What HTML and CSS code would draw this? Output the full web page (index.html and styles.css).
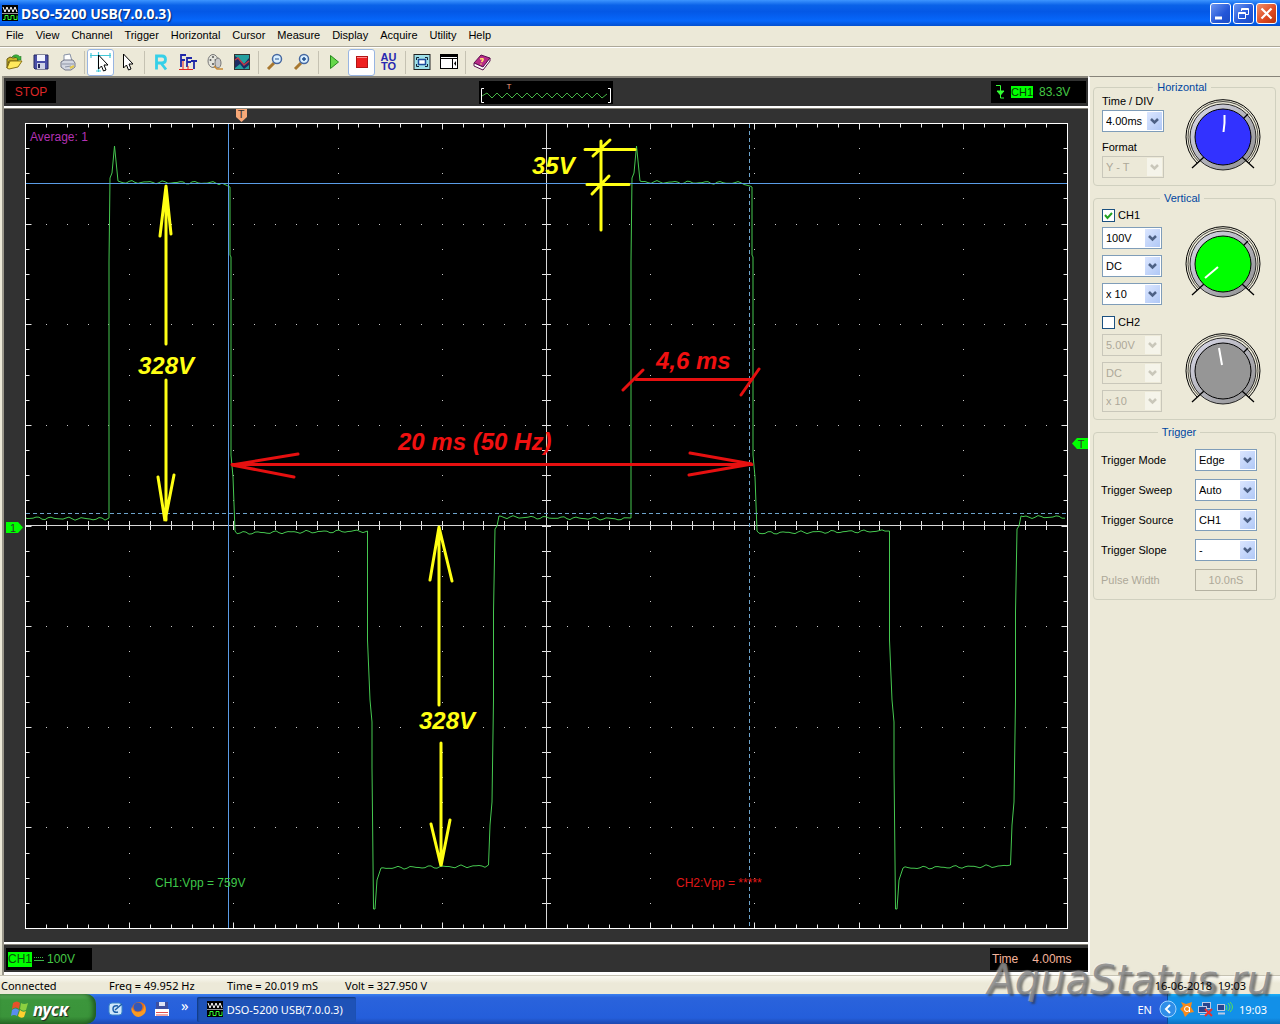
FILE: index.html
```html
<!DOCTYPE html>
<html lang="en">
<head>
    <meta charset="UTF-8">
    <meta name="viewport" content="width=device-width, initial-scale=1.0">
    <title>DSO-5200 USB(7.0.0.3)</title>
    <link rel="stylesheet" href="styles.css">
</head>
<body>

    <!-- shared drawings -->
    <svg class="defs" width="0" height="0" aria-hidden="true">
        <defs>
            <linearGradient id="ringFill" x1="0" y1="0" x2="1" y2="1">
                <stop offset="0" stop-color="#dcdcec"/>
                <stop offset="1" stop-color="#8c8c8c"/>
            </linearGradient>
            <symbol id="appIcon" viewBox="0 0 16 16">
                <rect width="16" height="16" fill="#000"/>
                <path d="M0 8.500H16" stroke="#999"/>
                <path d="M1 2l2 5 2-5 2 5 2-5 2 5 2-5 2 5" fill="none" stroke="#fff"/>
                <path d="M1 14.500h2v-4h3v4h3v-4h3v4h3v-4" fill="none" stroke="#3f3"/>
            </symbol>
            <symbol id="knobBase" viewBox="0 0 78 82">
                <path d="M13 67A37 37 0 1 1 65 67" fill="none" stroke="#000"/>
                <path d="M15 66A35 35 0 1 1 63 66" fill="none" stroke="#000" stroke-width=".7"/>
                <circle cx="39" cy="41" r="33" fill="url(#ringFill)" stroke="#000" stroke-width=".8"/>
                <path d="M8 72l12-11M70 72L58 61M59 23l5-5" stroke="#000" stroke-width="1.300"/>
            </symbol>
        </defs>
    </svg>

    <header class="titlebar">
        <svg width="16" height="16"><use href="#appIcon"/></svg>
        <h1>DSO-5200 USB(7.0.0.3)</h1>
        <div class="window-buttons">
            <button aria-label="Minimize"><svg width="19" height="19"><path d="M4 14h7" stroke="#fff" stroke-width="3"/></svg></button>
            <button aria-label="Restore"><svg width="19" height="19" fill="none" stroke="#fff"><path d="M7.500 7V4.500h7v6H12M7 5.500h7M4.500 8.500h7v6h-7zM4 9.500h7"/></svg></button>
            <button class="close" aria-label="Close"><svg width="19" height="19"><path d="M4.500 4.500l10 10M14.500 4.500l-10 10" stroke="#fff" stroke-width="2.200"/></svg></button>
        </div>
    </header>

    <nav class="menubar">
        <button>File</button>
        <button>View</button>
        <button>Channel</button>
        <button>Trigger</button>
        <button>Horizontal</button>
        <button>Cursor</button>
        <button>Measure</button>
        <button>Display</button>
        <button>Acquire</button>
        <button>Utility</button>
        <button>Help</button>
    </nav>

    <div class="toolbar">
        <button aria-label="Open">
            <svg width="18" height="18"><path d="M2 6l3-2 3 1 5-1v4H4l-2 7z" fill="#c8b428" stroke="#6b5a10"/><path d="M2 15l3-7h12l-4 6-9 2z" fill="#ffe95c" stroke="#8a7413"/><path d="M7 4c2-3 6-3 8 0l1-1v4h-4l1-1c-2-2-4-2-6-2z" fill="#3bb13b" stroke="#1c701c" stroke-width=".5"/></svg>
        </button>
        <button aria-label="Save">
            <svg width="18" height="18"><path d="M2 2h14v14H3l-1-1z" fill="#4a4fa8" stroke="#24285f"/><rect x="5" y="2" width="8" height="6" fill="#f2f4ff"/><rect x="5" y="10" width="8" height="6" fill="#cfd3e6"/><rect x="6" y="11" width="2" height="4" fill="#24285f"/></svg>
        </button>
        <button aria-label="Print">
            <svg width="18" height="18"><path d="M5 8V2l6-1 2 7z" fill="#fff" stroke="#8791a5"/><path d="M2 9l3-2h9l2 3v4l-4 3H6l-4-3z" fill="#d4d8e2" stroke="#74798a"/><path d="M3 11h12M6 14l6-1" stroke="#8f95a6"/><path d="M11 15l4-2" stroke="#e5c94a" stroke-width="2"/></svg>
        </button>
        <span class="separator"></span>
        <button class="pressed" aria-label="Cross cursor">
            <svg width="22" height="22" fill="none"><path d="M0 4.500h21M8.500 1v20M1 2v5M20 2v5M6 20h5" stroke="#45c8d8" stroke-width="1.200"/><path d="M8.500 4v14l3-3 2 5 2.500-1-2-5h4z" fill="#fff" stroke="#000"/></svg>
        </button>
        <button aria-label="Pointer">
            <svg width="18" height="18"><path d="M4.500 1v14l3-3 2 5 2.500-1-2-5h4z" fill="#fff" stroke="#000"/></svg>
        </button>
        <span class="separator"></span>
        <button aria-label="Reference">
            <svg width="18" height="18" fill="none"><path d="M4.500 16.500V3h5.500q3.500 0 3.500 3.500T10 10H5M9 10l5 6.500" stroke="#35d0e8" stroke-width="2.800"/></svg>
        </button>
        <button aria-label="FFT">
            <svg width="20" height="20" fill="none"><path d="M3 15V3h5M3 8h4M9 15V6h5M9 10h4M13 9h6M16 9v8" stroke="#2028a8" stroke-width="1.800"/><path d="M1 17.500h14M5 9v8M10 14v4" stroke="#e02020"/></svg>
        </button>
        <button aria-label="Record">
            <svg width="18" height="18"><ellipse cx="7" cy="8" rx="5" ry="6.500" fill="#e4e4dc" stroke="#777"/><g fill="#555"><circle cx="7" cy="4" r="1"/><circle cx="4.500" cy="7" r="1"/><circle cx="9.500" cy="7" r="1"/><circle cx="7" cy="11" r="1"/></g><ellipse cx="12" cy="10" rx="3" ry="5" fill="#c9c9c9" stroke="#777"/><path d="M8 13l3 3h6" fill="none" stroke="#c98a35" stroke-width="1.500"/></svg>
        </button>
        <button aria-label="Pass fail">
            <svg width="18" height="18"><rect x="1.500" y="1.500" width="15" height="15" fill="#24a0a0" stroke="#333"/><path d="M2 3l5 4 4 4 5-6v7l-5 4-4-5-5 4z" fill="#1d2c64"/><path d="M2 7l3-2 6 7 5-4" fill="none" stroke="#c03848" stroke-width="1.500"/></svg>
        </button>
        <span class="separator"></span>
        <button aria-label="Zoom out">
            <svg width="18" height="18"><path d="M2 16l6-6" stroke="#a87830" stroke-width="3"/><circle cx="11" cy="6" r="4.500" fill="#d9efff" stroke="#4668a0" stroke-width="1.500"/><path d="M9 6h4" stroke="#205090"/></svg>
        </button>
        <button aria-label="Zoom in">
            <svg width="18" height="18"><path d="M2 16l6-6" stroke="#a87830" stroke-width="3"/><circle cx="11" cy="6" r="4.500" fill="#d9efff" stroke="#4668a0" stroke-width="1.500"/><path d="M9 6h4M11 4v4" stroke="#205090" stroke-width="1.500"/></svg>
        </button>
        <span class="separator"></span>
        <button aria-label="Run">
            <svg width="18" height="18"><path d="M4.500 2.500v13l8-6.500z" fill="#66d84a" stroke="#258a1c"/></svg>
        </button>
        <button class="pressed" aria-label="Stop">
            <svg width="18" height="18"><rect x="3.500" y="3.500" width="11" height="11" fill="#ee2020" stroke="#b31515"/><path d="M4 4.500h10" stroke="#ff8a8a"/></svg>
        </button>
        <button class="auto">AU<br>TO</button>
        <span class="separator"></span>
        <button aria-label="Full screen">
            <svg width="18" height="18"><rect x="1" y="1.500" width="16" height="15" fill="#9ee0e8" stroke="#222"/><path d="M3.500 7V4.500H6M12 4.500h2.500V7M3.500 11v2.500H6M12 13.500h2.500V11" fill="none" stroke="#123"/><rect x="5.500" y="6.500" width="7" height="5" fill="#fff" stroke="#1d4b9a" stroke-width="1.500"/></svg>
        </button>
        <button aria-label="Hide panel">
            <svg width="20" height="18"><rect x="1.500" y="1.500" width="17" height="14" fill="#fff" stroke="#000"/><path d="M2 3h17" stroke="#000" stroke-width="2"/><path d="M2 5.500h17M13.500 5v11" stroke="#000"/><path d="M17 8l-2 2.500 2 2.500z"/></svg>
        </button>
        <span class="separator"></span>
        <button aria-label="Help">
            <svg width="18" height="18"><path d="M1 10l7-8 9 3-7 9z" fill="#b82a86" stroke="#5b0f4f"/><path d="M1 10v3l9 4 7-9V5l-7 9z" fill="#fff" stroke="#5b0f4f"/><path d="M7 6q4-1 3 1L8.500 9M8 10.500v1" fill="none" stroke="#ffe36a" stroke-width="1.500"/></svg>
        </button>
    </div>

    <main class="main">
        <section class="workspace">
            <div class="info-bar info-top">
                <div class="readout stop">STOP</div>
                <svg class="overview" width="134" height="23" aria-label="Buffer position">
                    <rect width="134" height="23" fill="#000"/>
                    <path d="M5 7.500H2.500v14H5M129 7.500h2.500v14H129" fill="none" stroke="#fff"/>
                    <path d="M3 15l5-3 5 5 5-5 5 5 5-5 5 5 5-5 5 5 5-5 5 5 5-5 5 5 5-5 5 5 5-5 5 5 5-5 5 5 5-5 5 5 5-5 5 5 5-5 5 5 5-4" fill="none" stroke="#46b446"/>
                    <text class="overview-mark" x="30" y="8" text-anchor="middle">T</text>
                </svg>
                <div class="readout trigger-level">
                    <svg width="10" height="16" fill="none" stroke="#3f3"><path d="M1 1.500h4.500v12.500H9"/><path d="M2 7h7l-3.500 4z" fill="#3f3"/></svg>
                    <span class="badge">CH1</span>
                    <span>83.3V</span>
                </div>
            </div>

            <div class="view">
                <svg class="scope" viewBox="4 109 1084 833" role="img" aria-label="Waveform display">
                    <rect x="25" y="123" width="1043" height="806" fill="#000"/>
                    <path id="dots" stroke="#c8c8c8"/>
                    <path id="ticks" stroke="#e6e6e6"/>
                    <path d="M25.500 525.500H1067.500M546.500 123.500V928.500" stroke="#d8d8d8"/>
                    <rect x="25.500" y="123.500" width="1042" height="805" fill="none" stroke="#fff"/>

                    <path id="trace" fill="none" stroke="#46c850"/>

                    <!-- measuring cursors -->
                    <path d="M228.500 124V928M26 183.500H1067" stroke="#5a9ce6"/>
                    <path d="M749.500 124V928M26 513.500H1067" stroke="#6da4cc" stroke-dasharray="4 3"/>

                    <!-- position markers -->
                    <path d="M236 109h11v8l-5.500 5-5.500-5z" fill="#f7a878"/>
                    <text class="mark" x="241" y="118" text-anchor="middle">T</text>
                    <path d="M6 522h12l5 5.500-5 5.500H6z" fill="#0f0"/>
                    <text class="mark" x="13" y="532" text-anchor="middle">1</text>
                    <path d="M1088 438h-11l-5 5.500 5 5.500h11z" fill="#0f0"/>
                    <text class="mark" x="1081" y="448" text-anchor="middle">T</text>

                    <text class="note" x="30" y="141" fill="#b432b4">Average: 1</text>
                    <text class="note" x="155" y="887" fill="#3fc84a">CH1:Vpp = 759V</text>
                    <text class="note" x="676" y="887" fill="#e01818">CH2:Vpp = *****</text>

                    <g class="dimension yellow">
                        <path d="M166 344V186M160 236l6-50 5 48M166 380v140M158 477l7 44 9-46"/>
                        <path d="M439 705V527M430 580l9-53 13 54M441 743v122M431 824l10 42 9-46"/>
                        <path d="M601 141v89M585 149.500h50M587 184.500h42M593 156l17-16M592 194l17-18"/>
                        <text x="138" y="374">328V</text>
                        <text x="419" y="729">328V</text>
                        <text x="532" y="174">35V</text>
                    </g>
                    <g class="dimension red">
                        <path d="M232 464.500H752M298 454l-66 11 62 12M690 453l62 11-63 11M636 379.500h116M623 390l20-20M741 395l18-26"/>
                        <text x="398" y="450">20 ms (50 Hz)</text>
                        <text x="656" y="369">4,6 ms</text>
                    </g>
                </svg>
            </div>

            <div class="info-bar info-bottom">
                <div class="readout channel-scale">
                    <span class="badge">CH1</span>
                    <svg width="11" height="8" stroke="#3fb84a"><path d="M0 5.500h10"/><path d="M0 2.500h10" stroke-dasharray="1 1"/></svg>
                    <span>100V</span>
                </div>
                <div class="readout timebase"><span>Time</span><span>4.00ms</span></div>
            </div>
        </section>

        <aside class="panel">
            <fieldset>
                <legend>Horizontal</legend>
                <div class="channel">
                    <div class="controls">
                        <label for="timeDiv">Time / DIV</label>
                        <select id="timeDiv" class="wide"><option>4.00ms</option></select>
                        <label for="format" class="next-label">Format</label>
                        <select id="format" class="wide" disabled><option>Y - T</option></select>
                    </div>
                    <svg class="knob" width="78" height="82">
                        <use href="#knobBase"/>
                        <circle cx="39" cy="41" r="28" fill="#3232ff" stroke="#000"/>
                        <path d="M40.500 19v8l-1 9" fill="none" stroke="#fff" stroke-width="2"/>
                    </svg>
                </div>
            </fieldset>

            <fieldset class="vertical">
                <legend>Vertical</legend>
                <div class="channel">
                    <div class="controls stacked">
                        <label class="check"><input type="checkbox" checked>CH1</label>
                        <select aria-label="CH1 volts per division"><option>100V</option></select>
                        <select aria-label="CH1 coupling"><option>DC</option></select>
                        <select aria-label="CH1 probe"><option>x 10</option></select>
                    </div>
                    <svg class="knob" width="78" height="82">
                        <use href="#knobBase"/>
                        <circle cx="39" cy="41" r="28" fill="#0f0" stroke="#000"/>
                        <path d="M21 55l13-11" stroke="#fff" stroke-width="2"/>
                    </svg>
                </div>
                <div class="channel">
                    <div class="controls stacked">
                        <label class="check"><input type="checkbox">CH2</label>
                        <select aria-label="CH2 volts per division" disabled><option>5.00V</option></select>
                        <select aria-label="CH2 coupling" disabled><option>DC</option></select>
                        <select aria-label="CH2 probe" disabled><option>x 10</option></select>
                    </div>
                    <svg class="knob" width="78" height="82">
                        <use href="#knobBase"/>
                        <circle cx="39" cy="41" r="28" fill="#969696" stroke="#000"/>
                        <path d="M35 18l3 17" stroke="#fff" stroke-width="2"/>
                    </svg>
                </div>
            </fieldset>

            <fieldset class="trigger">
                <legend>Trigger</legend>
                <div class="trigger-grid">
                    <label for="mode">Trigger Mode</label>
                    <select id="mode"><option>Edge</option></select>
                    <label for="sweep">Trigger Sweep</label>
                    <select id="sweep"><option>Auto</option></select>
                    <label for="source">Trigger Source</label>
                    <select id="source"><option>CH1</option></select>
                    <label for="slope">Trigger Slope</label>
                    <select id="slope"><option>-</option></select>
                    <label for="pulse" class="off">Pulse Width</label>
                    <input id="pulse" type="text" value="10.0nS" disabled>
                </div>
            </fieldset>
        </aside>
    </main>

    <footer class="statusbar">
        <span class="state">Connected</span>
        <span class="reading">Freq = 49.952 Hz</span>
        <span class="reading">Time = 20.019 mS</span>
        <span class="reading">Volt = 327.950 V</span>
        <span class="stamp">16-06-2018&nbsp; 19:03</span>
    </footer>

    <div class="taskbar">
        <button class="start">
            <svg width="20" height="20"><path d="M3 4q4-3 7 0L9 10q-3-3-7 0z" fill="#e8502a"/><path d="M11 4q3 2 7 0l-2 7q-3 2-6-1z" fill="#8cd040"/><path d="M2 11q3-3 7 0l-2 6q-3-2-6 0z" fill="#5a8cf0"/><path d="M10 11q3 3 6 1l-2 6q-3 2-6-1z" fill="#ffd030"/></svg>
            пуск
        </button>
        <div class="quick-launch">
            <button aria-label="Desktop"><svg width="16" height="16"><rect x="1" y="2" width="13" height="12" rx="3" fill="#cfe8fa" stroke="#3c86c8"/><path d="M10 5q-5-1-5 3t5 3M7 9l7-6" fill="none" stroke="#1c5ea8" stroke-width="1.500"/></svg></button>
            <button aria-label="Firefox"><svg width="16" height="16"><circle cx="8" cy="8" r="7" fill="#e8701a"/><circle cx="7" cy="6" r="4.500" fill="#3458b8"/><path d="M1 6q1 6 7 5t5-8q4 7-1 11t-9 0-2-8z" fill="#f79a24"/></svg></button>
            <button aria-label="Save tool"><svg width="16" height="16"><rect x="2" y="1" width="12" height="7" fill="#3d4fa0"/><rect x="5" y="1" width="6" height="4" fill="#dde3f5"/><rect x="1" y="8" width="14" height="7" fill="#fff"/><path d="M2 11.500h12M2 14h12" stroke="#e05050"/></svg></button>
            <button class="more" aria-label="More">»</button>
        </div>
        <button class="task"><svg width="16" height="16"><use href="#appIcon"/></svg>DSO-5200 USB(7.0.0.3)</button>
        <span class="lang">EN</span>
        <div class="tray">
            <button class="expand" aria-label="Show hidden icons"><svg width="18" height="18"><circle cx="9" cy="9" r="8" fill="#2f8ee8" stroke="#9fd4ff"/><path d="M11 5L7 9l4 4" fill="none" stroke="#fff" stroke-width="2"/></svg></button>
            <svg width="16" height="16"><path d="M2 1l5 2 6-2-1 5 3 5-5 1-4 4-2-5-3-3 3-3z" fill="#f58a1c"/><circle cx="8" cy="8" r="2.500" fill="none" stroke="#fff"/><path d="M10.500 6v5" stroke="#fff"/></svg>
            <svg width="17" height="16"><rect x="5.500" y="1.500" width="8" height="6" fill="#27458f" stroke="#bcc8e4"/><rect x="1.500" y="5.500" width="8" height="6" fill="#27458f" stroke="#bcc8e4"/><path d="M3 13.500h6" stroke="#bcc8e4"/><path d="M8 8l7 7M15 8l-7 7" stroke="#e83030" stroke-width="2"/></svg>
            <svg width="17" height="16"><rect x="1.500" y="3.500" width="7" height="6" fill="#27458f" stroke="#bcc8e4"/><path d="M2 12.500h7" stroke="#bcc8e4" stroke-width="2"/><path d="M10 4q2 3 0 5M12 2q4 4 0 8M14 1q5 5 0 10" fill="none" stroke="#58e058"/></svg>
            <time>19:03</time>
        </div>
    </div>

    <div class="watermark">AquaStatus.ru</div>

    <script src="script.js"></script>
</body>
</html>
```
FILE: styles.css
```css
* {
    box-sizing: border-box;
}

body {
    margin: 0;
    min-height: 100vh;
    display: flex;
    flex-direction: column;
    position: relative;
    overflow: hidden;
    background-color: #ece9d8;
    color: #000;
    font-family: "Noto Sans", Tahoma, sans-serif;
    font-size: 11px;
}

svg {
    display: block;
    flex: none;
}

.defs {
    position: absolute;
}

button {
    font: inherit;
    color: inherit;
    border: none;
    background: none;
    padding: 0;
}

/* Title bar */
.titlebar {
    display: flex;
    align-items: center;
    height: 26px;
    padding: 0 3px 0 2px;
    background: linear-gradient(#3d95ff, #0a62e8 20%, #0458e6 45%, #0667fb 80%, #0350d0);
}

.titlebar h1 {
    flex: 1;
    margin: 0 0 0 3px;
    color: #fff;
    font-size: 14px;
    font-weight: bold;
    text-shadow: 1px 1px 1px #0a246a;
}

.window-buttons {
    display: flex;
    gap: 2px;
}

.window-buttons button {
    width: 21px;
    height: 21px;
    border: 1px solid #fff;
    border-radius: 3px;
    background: linear-gradient(135deg, #6c96f0, #2356d8 60%, #1c4cc4);
}

.window-buttons .close {
    background: linear-gradient(135deg, #f0906c, #dd4820 60%, #b83410);
}

/* Menu */
.menubar {
    display: flex;
    height: 21px;
    border-bottom: 1px solid #aca899;
    font-family: "Liberation Sans", Arial, sans-serif;
}

.menubar button {
    padding: 0 6px 2px;
}

/* Toolbar */
.toolbar {
    display: flex;
    align-items: center;
    height: 29px;
    border-top: 1px solid #fff;
}

.toolbar button {
    display: flex;
    align-items: center;
    justify-content: center;
    width: 27px;
    height: 27px;
}

.toolbar .pressed {
    background-color: #fff;
    border: 1px solid #98b5e2;
    border-radius: 3px;
}

.toolbar .auto {
    color: #2828b0;
    font-family: "Liberation Sans", Arial, sans-serif;
    font-weight: bold;
    line-height: 9px;
}

.separator {
    width: 6px;
    height: 23px;
    background: linear-gradient(#c5c2b2, #c5c2b2) center / 1px 100% no-repeat;
}

/* Scope area */
.main {
    flex: 1;
    display: flex;
    font-family: "Liberation Sans", Arial, sans-serif;
}

.workspace {
    flex: 1;
    min-width: 0;
    display: flex;
    flex-direction: column;
    margin-left: 2px;
    border-left: 2px solid #9a978b;
    background-color: #323232;
}

.info-bar {
    display: flex;
    align-items: center;
    justify-content: space-between;
    font-size: 12px;
}

.info-top {
    height: 32px;
    padding: 0 2px;
    border-top: 2px solid #87847a;
    border-bottom: 2px solid #fff;
}

.info-bottom {
    height: 33px;
    border-top: 2px solid #fff;
    border-bottom: 3px solid #fff;
    box-shadow: inset 0 1px #87847a;
    padding: 2px 0 0 2px;
}

.readout {
    display: flex;
    align-items: center;
    height: 22px;
    background-color: #000;
    color: #46c846;
}

.readout.stop {
    width: 50px;
    justify-content: center;
    color: #dc2828;
}

.trigger-level {
    width: 95px;
    padding-left: 4px;
    gap: 6px;
}

.badge {
    background-color: #0f0;
    color: #0a500a;
}

.trigger-level .badge {
    font-size: 11px;
    line-height: 12px;
    color: #063806;
}

.overview {
    margin-left: 380px;
    margin-right: 336px;
}

.overview-mark {
    font-size: 8px;
    fill: #f0a080;
}

.channel-scale {
    width: 86px;
    padding-left: 2px;
    gap: 2px;
}

.channel-scale .badge {
    line-height: 15px;
}

.timebase {
    width: 98px;
    padding-left: 2px;
    gap: 14px;
    color: #f5b49b;
}

.view {
    flex: 1;
    min-height: 0;
    border-top: 1px solid #87847a;
}

.scope {
    width: 100%;
    height: 100%;
}

.note {
    font-size: 12px;
}

.mark {
    font-size: 11px;
    fill: #303030;
}

.dimension path {
    fill: none;
    stroke-width: 3;
    stroke-linecap: round;
}

.dimension text {
    font-size: 24px;
    font-weight: bold;
    font-style: italic;
}

.yellow path {
    stroke: #ffff14;
}

.yellow text {
    fill: #ffff14;
}

.red path {
    stroke: #e61010;
}

.red text {
    fill: #f01010;
}

/* Right panel */
.panel {
    width: 192px;
    display: flex;
    flex-direction: column;
    gap: 5px;
    padding: 3px 4px 0 3px;
    border-top: 1px solid #87847a;
    border-left: 2px solid #fff;
}

fieldset {
    margin: 0;
    min-width: 0;
    padding: 0 13px 7px 8px;
    border: 1px solid #d0d0bf;
    border-radius: 4px;
}

legend {
    margin: 0 auto;
    padding: 0 4px;
    line-height: 14px;
    color: #0046a0;
}

.vertical {
    padding-top: 4px;
}

.channel {
    display: flex;
    justify-content: space-between;
    align-items: flex-end;
}

.channel + .channel {
    margin-top: 11px;
}

.controls {
    display: flex;
    flex-direction: column;
    gap: 2px;
    line-height: 14px;
}

.controls .next-label {
    margin-top: 6px;
}

.stacked {
    gap: 6px;
}

.check {
    display: flex;
    align-items: center;
    gap: 3px;
    height: 12px;
}

input[type="checkbox"] {
    appearance: none;
    width: 13px;
    height: 13px;
    margin: 0;
    border: 1px solid #1c5180;
    background-color: #fff;
}

input[type="checkbox"]:checked {
    background: #fff url("data:image/svg+xml,%3Csvg xmlns='http://www.w3.org/2000/svg' width='11' height='11'%3E%3Cpath d='M2 5l2.500 3L9 3' fill='none' stroke='%2321a121' stroke-width='2'/%3E%3C/svg%3E") no-repeat center;
}

select {
    appearance: none;
    width: 60px;
    height: 22px;
    padding: 0 17px 0 3px;
    border: 1px solid #7f9db9;
    border-radius: 0;
    color: #000;
    font: inherit;
    background:
        url("data:image/svg+xml,%3Csvg xmlns='http://www.w3.org/2000/svg' width='15' height='18'%3E%3Cpath d='M4 7l3.500 3.500L11 7' fill='none' stroke='%234d6185' stroke-width='2.500'/%3E%3C/svg%3E") right 1px center no-repeat,
        linear-gradient(135deg, #dbe6ff, #b0c8f6) right 1px center / 15px 18px no-repeat,
        #fff;
}

select.wide {
    width: 62px;
}

select:disabled {
    opacity: 1;
    color: #aca899;
    border-color: #c9c7ba;
    background:
        url("data:image/svg+xml,%3Csvg xmlns='http://www.w3.org/2000/svg' width='15' height='18'%3E%3Cpath d='M4 7l3.500 3.500L11 7' fill='none' stroke='%23c9c7ba' stroke-width='2.500'/%3E%3C/svg%3E") right 1px center no-repeat,
        linear-gradient(#f5f4ea, #f5f4ea) right 1px center / 15px 18px no-repeat,
        #ece9d8;
}

.trigger {
    padding: 10px 18px 8px 7px;
}

.trigger-grid {
    display: grid;
    grid-template-columns: 1fr 62px;
    row-gap: 8px;
    align-items: center;
}

.trigger-grid select {
    width: 100%;
}

.off {
    color: #aca899;
}

input[type="text"] {
    width: 100%;
    height: 22px;
    padding: 0;
    border: 1px solid #b5b2a2;
    background-color: #ece9d8;
    color: #aca899;
    font: inherit;
    text-align: center;
}

/* Status bar */
.statusbar {
    display: flex;
    align-items: center;
    height: 19px;
    padding: 0 34px 0 1px;
    border-top: 1px solid #c5c2b2;
    background: linear-gradient(#fbfaf3, #ece9d8 40%);
}

.state {
    width: 108px;
}

.reading {
    width: 118px;
}

.stamp {
    position: relative;
    z-index: 1;
    margin-left: auto;
}

/* Taskbar */
.taskbar {
    display: flex;
    align-items: center;
    height: 30px;
    color: #fff;
    background: linear-gradient(#3a80f0, #2a63dc 12%, #245edb 80%, #1c48b0);
}

.start {
    display: flex;
    align-items: center;
    gap: 3px;
    width: 96px;
    height: 100%;
    padding-left: 10px;
    border-radius: 0 10px 10px 0;
    background: linear-gradient(#60b060, #3c963c 20%, #3a943a 75%, #2a702a);
    box-shadow: inset -3px 0 4px #205a20;
    font-size: 17px;
    font-weight: bold;
    font-style: italic;
    text-shadow: 1px 1px 1px #222;
}

.quick-launch {
    display: flex;
    align-items: center;
    gap: 7px;
    margin-left: 12px;
}

.quick-launch .more {
    align-self: flex-start;
    margin-left: 4px;
    font-size: 15px;
    line-height: 8px;
}

.task {
    display: flex;
    align-items: center;
    gap: 4px;
    width: 159px;
    height: 25px;
    margin-left: 8px;
    padding-left: 10px;
    border-radius: 2px;
    background-color: #1e52b7;
    box-shadow: inset 1px 1px 2px #103878;
}

.lang {
    margin-left: auto;
}

.tray {
    display: flex;
    align-items: center;
    gap: 2px;
    height: 100%;
    margin-left: 15px;
    padding-right: 13px;
    border-left: 1px solid #0c4c9c;
    background: linear-gradient(#1cb0f8, #1290e8 12%, #1290e8 80%, #0c70c0);
}

.tray .expand {
    margin-left: -9px;
}

.tray time {
    margin-left: 4px;
}

/* Watermark over everything */
.watermark {
    position: absolute;
    right: 8px;
    bottom: 21px;
    color: rgba(125, 125, 125, 0.75);
    font-family: "DejaVu Sans", Verdana, sans-serif;
    font-size: 40px;
    font-style: italic;
    line-height: 46px;
    text-shadow: -1px -1px 1px rgba(240, 240, 240, 0.5), 2px 2px 2px rgba(50, 50, 50, 0.6);
    pointer-events: none;
}
```
FILE: script.js
```js
// Graticule: 10 x 8 divisions, 5 and 4 subdivisions
const left = 25.5, top_ = 123.5, width = 1042, height = 805;
const right = left + width, bottom = top_ + height;
let dots = '';
let ticks = '';

for (let i = 1; i < 50; i++) {
    const x = Math.round(left + width * i / 50 - 0.5) + 0.5;
    const len = i % 5 === 0 ? 6 : 4;
    ticks += `M${x} ${top_}v${len}M${x} ${bottom}v${-len}M${x} 521v9`;
    for (let row = 1; row < 8; row++) {
        const y = Math.round(top_ + height * row / 8 - 0.5) + 0.5;
        dots += `M${x - 0.5} ${y}h1`;
    }
}

for (let j = 1; j < 32; j++) {
    const y = Math.round(top_ + height * j / 32 - 0.5) + 0.5;
    const len = j % 4 === 0 ? 6 : 4;
    ticks += `M${left} ${y}h${len}M${right} ${y}h${-len}M542 ${y}h9`;
    for (let col = 1; col < 10; col++) {
        const x = Math.round(left + width * col / 10 - 0.5);
        dots += `M${x} ${y}h1`;
    }
}

document.getElementById('dots').setAttribute('d', dots);
document.getElementById('ticks').setAttribute('d', ticks);

// Noisy plateau between two points
function plateau(x1, y1, x2, y2) {
    let s = '';
    for (let x = x1; x <= x2; x += 3) {
        const y = y1 + (y2 - y1) * (x - x1) / (x2 - x1);
        s += `L${x} ${(y + Math.sin(x * 1.7) + Math.sin(x * 0.61) * 0.6).toFixed(1)}`;
    }
    return s;
}

function period(o) {
    let s = `L${o + 109} 518L${o + 109} 262L${o + 110} 178L${o + 112} 173L${o + 114.5} 146L${o + 118} 181`;
    s += plateau(o + 120, 182, o + 222, 183);
    s += `L${o + 228} 186L${o + 230} 187L${o + 230} 255L${o + 231} 257L${o + 231} 455L${o + 233} 477L${o + 235} 531`;
    s += plateau(o + 237, 533, o + 365, 531);
    s += `L${o + 367.5} 531V640L${o + 370} 700L${o + 372} 722V768L${o + 373.5} 909H${o + 375}L${o + 377} 880L${o + 381} 868`;
    s += plateau(o + 383, 868, o + 486, 866);
    s += `L${o + 488.5} 865L${o + 490} 825L${o + 492} 802L${o + 493.5} 700V612L${o + 495} 529L${o + 497} 526L${o + 499} 516`;
    return s;
}

const trace = 'M26 518' + plateau(27, 518, 106, 519) + period(0)
    + plateau(501, 517, 629, 519) + period(522) + plateau(1023, 517, 1066, 517);
document.getElementById('trace').setAttribute('d', trace);
```
